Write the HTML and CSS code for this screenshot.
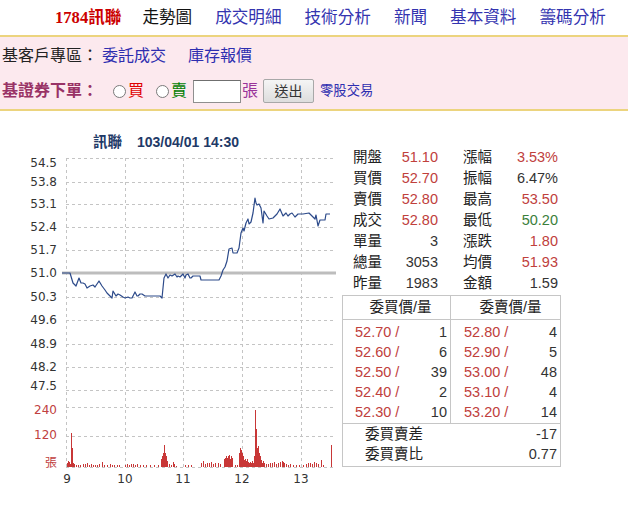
FILE: index.html
```html
<!DOCTYPE html>
<html lang="zh-Hant">
<head>
<meta charset="utf-8">
<title>1784訊聯 走勢圖</title>
<link rel="stylesheet" href="styles.css">
</head>
<body>
<div class="nav">
  <span class="brand"><span class="num">1784</span>訊聯</span>
  <span class="cur">走勢圖</span>
  <a class="nl">成交明細</a>
  <a class="nl">技術分析</a>
  <a class="nl">新聞</a>
  <a class="nl">基本資料</a>
  <a class="nl">籌碼分析</a>
</div>
<div class="panel">
  <div class="row1">
    <span class="lbl">基客戶專區：</span><a class="lk">委託成交</a><a class="lk lk2">庫存報價</a>
  </div>
  <div class="row2">
    <span class="order">基證券下單：</span>
    <span class="radio r1"></span><span class="buy">買</span>
    <span class="radio r2"></span><span class="sell">賣</span>
    <span class="qty"></span><span class="zhang">張</span>
    <span class="btn">送出</span>
    <a class="odd">零股交易</a>
  </div>
</div>
<div class="main">
  <div class="chart">
    <div class="title"><span class="tname">訊聯</span><span class="tdate">103/04/01 14:30</span></div>
    <svg class="plot" width="340" height="335" viewBox="0 150 340 335" xmlns="http://www.w3.org/2000/svg">
      <g stroke="#c4c4c4" stroke-width="1" stroke-dasharray="3 3" fill="none">
        <path d="M66 157.5H334M66 181.5H334M66 203.5H334M66 226.5H334M66 249.5H334M66 296.5H334M66 319.5H334M66 343.5H334M66 366.5H334M66 389.5H334M66 406.5H334M66 435.5H334M66 466.5H334"/>
        <path d="M66.5 157V467M125.5 157V467M183.5 157V467M242.5 157V467M301.5 157V467"/>
      </g>
      <path d="M62 272H336" stroke="#bdbdbd" stroke-width="3"/>
      <polyline fill="none" stroke="#2c4a8a" stroke-width="1.2" stroke-linejoin="round" points="62,272 70,272 73,282 76,285 79,277 81,282 83,282 85,283 87,287 90,285 93,284 95,286 97,283 99,280 102,285 105,289 107,292 110,295 112,297 113,290 116,295 118,293 120,294 123,296 125,297 128,296 130,297 132,297 135,291 137,295 138,295 140,293 142,293 145,295 160,295 162,297 164,277 166,273 168,277 170,274 172,275 175,273 177,276 178,275 180,276 183,273 185,277 186,274 188,273 190,277 191,277 193,275 200,275 201,279 219,279 221,275 223,269 225,266 227,260 229,248 232,247 233,252 237,252 239,247 241,232 243,227 244,230 246,222 248,218 249,223 251,221 253,212 255,197 256,202 257,204 259,203 261,207 263,222 264,210 267,215 269,218 273,217 277,213 280,208 283,215 286,212 288,215 290,213 292,212 295,216 298,213 303,213 309,212 312,215 315,218 316,214 318,225 320,219 325,219 326,213 330,213"/>
      <path stroke="#c83737" stroke-width="1" fill="none" d="M67.5 466V462M68.5 466V460M69.5 466V461M70.5 466V463M71.5 466V432M72.5 466V447M73.5 466V462M74.5 466V463M76.5 466V464M78.5 466V464M80.5 466V464M83.5 466V463M85.5 466V463M87.5 466V462M89.5 466V464M91.5 466V463M93.5 466V464M95.5 466V464M97.5 466V464M99.5 466V463M102.5 466V461M104.5 466V464M107.5 466V464M110.5 466V463M112.5 466V464M114.5 466V464M117.5 466V464M119.5 466V464M125.5 466V464M127.5 466V463M129.5 466V464M131.5 466V463M133.5 466V463M135.5 466V464M137.5 466V463M140.5 466V464M143.5 466V464M146.5 466V464M150.5 466V464M154.5 466V464M158.5 466V464M161.5 466V458M162.5 466V455M163.5 466V452M164.5 466V444M165.5 466V452M166.5 466V455M167.5 466V460M169.5 466V463M171.5 466V464M173.5 466V461M174.5 466V463M176.5 466V465M185.5 466V464M188.5 466V464M191.5 466V464M201.5 466V462M203.5 466V460M205.5 466V463M207.5 466V462M209.5 466V462M211.5 466V461M213.5 466V463M215.5 466V462M218.5 466V462M220.5 466V463M224.5 466V458M225.5 466V457M226.5 466V455M227.5 466V457M228.5 466V455M229.5 466V454M230.5 466V458M231.5 466V455M232.5 466V457M235.5 466V464M237.5 466V464M239.5 466V452M240.5 466V447M241.5 466V449M242.5 466V452M243.5 466V455M244.5 466V459M245.5 466V458M246.5 466V460M247.5 466V458M248.5 466V461M249.5 466V462M250.5 466V461M251.5 466V462M252.5 466V460M253.5 466V462M254.5 466V455M255.5 466V409M256.5 466V428M257.5 466V447M258.5 466V445M259.5 466V452M260.5 466V455M261.5 466V459M262.5 466V462M263.5 466V460M264.5 466V462M266.5 466V463M268.5 466V463M270.5 466V462M272.5 466V462M274.5 466V461M276.5 466V463M278.5 466V462M280.5 466V461M282.5 466V460M283.5 466V461M284.5 466V462M286.5 466V463M288.5 466V464M290.5 466V463M293.5 466V464M296.5 466V464M299.5 466V464M303.5 466V464M306.5 466V463M308.5 466V462M310.5 466V462M312.5 466V463M314.5 466V461M316.5 466V462M318.5 466V463M321.5 466V459M323.5 466V464M331.5 466V444"/>
      <g class="ylab" text-anchor="end">
        <text x="57" y="166">54.5</text>
        <text x="57" y="185">53.8</text>
        <text x="57" y="207">53.1</text>
        <text x="57" y="230">52.4</text>
        <text x="57" y="253">51.7</text>
        <text x="57" y="276">51.0</text>
        <text x="57" y="300">50.3</text>
        <text x="57" y="323">49.6</text>
        <text x="57" y="347">48.9</text>
        <text x="57" y="370">48.2</text>
        <text x="57" y="389">47.5</text>
        <text class="red" x="57" y="413">240</text>
        <text class="red" x="57" y="438">120</text>
        <text class="red" x="57" y="466">張</text>
      </g>
      <g class="xlab" text-anchor="middle">
        <text x="67" y="482">9</text>
        <text x="125" y="482">10</text>
        <text x="183" y="482">11</text>
        <text x="242" y="482">12</text>
        <text x="301" y="482">13</text>
      </g>
    </svg>
  </div>
  <div class="side">
    <div class="stats">
      <span class="k">開盤</span><span class="v up">51.10</span><span class="k k2">漲幅</span><span class="v up">3.53%</span>
      <span class="k">買價</span><span class="v up">52.70</span><span class="k k2">振幅</span><span class="v">6.47%</span>
      <span class="k">賣價</span><span class="v up">52.80</span><span class="k k2">最高</span><span class="v up">53.50</span>
      <span class="k">成交</span><span class="v up">52.80</span><span class="k k2">最低</span><span class="v dn">50.20</span>
      <span class="k">單量</span><span class="v">3</span><span class="k k2">漲跌</span><span class="v up">1.80</span>
      <span class="k">總量</span><span class="v">3053</span><span class="k k2">均價</span><span class="v up">51.93</span>
      <span class="k">昨量</span><span class="v">1983</span><span class="k k2">金額</span><span class="v">1.59</span>
    </div>
    <div class="book">
      <div class="bhead">
        <div class="hc hl">委買價/量</div>
        <div class="hc hr">委賣價/量</div>
      </div>
      <div class="bbody">
        <div class="bcol bl">
          <div class="br"><span class="p">52.70 /</span><span>1</span></div>
          <div class="br"><span class="p">52.60 /</span><span>6</span></div>
          <div class="br"><span class="p">52.50 /</span><span>39</span></div>
          <div class="br"><span class="p">52.40 /</span><span>2</span></div>
          <div class="br"><span class="p">52.30 /</span><span>10</span></div>
        </div>
        <div class="bcol brc">
          <div class="br"><span class="p">52.80 /</span><span>4</span></div>
          <div class="br"><span class="p">52.90 /</span><span>5</span></div>
          <div class="br"><span class="p">53.00 /</span><span>48</span></div>
          <div class="br"><span class="p">53.10 /</span><span>4</span></div>
          <div class="br"><span class="p">53.20 /</span><span>14</span></div>
        </div>
      </div>
      <div class="bsum">
        <div class="sr"><span>委買賣差</span><span>-17</span></div>
        <div class="sr"><span>委買賣比</span><span>0.77</span></div>
      </div>
    </div>
  </div>
</div>
</body>
</html>
```

FILE: styles.css
```css
html, body {
  margin: 0;
  padding: 0;
  background: #fff;
  overflow: hidden;
}
body {
  width: 628px;
  font-family: "Liberation Sans", "Noto Sans CJK TC", sans-serif;
  color: #222;
}
a { text-decoration: none; cursor: pointer; }

.nav {
  height: 35px;
  display: flex;
  align-items: center;
  padding-left: 55px;
  gap: 23px;
  font-size: 16.6px;
  line-height: 20px;
}
.nav .brand {
  color: #cc0000;
  font-weight: bold;
  font-family: "Liberation Serif", "Noto Sans CJK TC", serif;
  margin-right: -2px;
}
.nav .cur { color: #111; }
.nav .nl { color: #3434b0; }

.panel {
  background: #fce9ee;
  border-top: 2px solid #ecd47e;
  border-bottom: 2px solid #ecd47e;
  padding-bottom: 2px;
  font-size: 16px;
  line-height: 20px;
}
.row1 {
  height: 38px;
  display: flex;
  align-items: center;
  white-space: nowrap;
  padding-left: 2px;
}
.lbl { margin-right: 4px; }
.lk { color: #2e2eb0; }
.lk2 { margin-left: 22px; }
.row2 {
  height: 32px;
  display: flex;
  align-items: center;
  white-space: nowrap;
  padding-left: 2px;
}
.order {
  color: #993366;
  font-weight: bold;
  margin-right: 2px;
}
.radio {
  display: inline-block;
  box-sizing: border-box;
  width: 13px;
  height: 13px;
  border: 1px solid #7a7a7a;
  border-radius: 50%;
  background: #fff;
}
.r1 { margin-left: 13px; }
.r2 { margin-left: 12px; }
.buy { color: #e00000; margin-left: 2px; }
.sell { color: #008000; margin-left: 2px; }
.qty {
  display: inline-block;
  box-sizing: border-box;
  width: 48px;
  height: 23px;
  margin-left: 6px;
  background: #fff;
  border: 1px solid #8f8f8f;
  border-top-color: #6f6f6f;
}
.zhang { color: #993399; margin-left: 1px; }
.btn {
  display: inline-flex;
  align-items: center;
  justify-content: center;
  box-sizing: border-box;
  width: 51px;
  height: 24px;
  margin-left: 5px;
  border: 1px solid #a8a8a8;
  border-radius: 2px;
  background: linear-gradient(#f5f5f5, #dddddd);
  color: #333;
  font-size: 14px;
}
.odd {
  color: #2e2eb0;
  font-size: 13.3px;
  margin-left: 6px;
}

.main {
  display: flex;
}
.chart {
  width: 340px;
  flex: none;
}
.title {
  margin-top: 22px;
  height: 18px;
  line-height: 18px;
  padding-left: 93px;
  font-size: 14px;
  font-weight: bold;
  color: #1f3a68;
  white-space: nowrap;
}
.tname { font-size: 14.5px; }
.tdate { margin-left: 15px; }
.plot { display: block; }
.ylab, .xlab {
  font-family: "DejaVu Sans", sans-serif;
  font-size: 12px;
  fill: #333;
}
.ylab .red { fill: #c04040; font-family: "DejaVu Sans", "Noto Sans CJK TC", sans-serif; }

.side {
  padding-top: 36px;
  font-size: 14.5px;
  color: #333;
}
.stats {
  margin-left: 13px;
  display: grid;
  grid-template-columns: 30px 55px 55px 65px;
  grid-auto-rows: 21px;
  align-items: center;
  line-height: 21px;
  white-space: nowrap;
}
.stats .k { color: #222; }
.stats .k2 { padding-left: 25px; }
.stats .v { text-align: right; }
.up { color: #c0403c; }
.dn { color: #3b7f3b; }

.book {
  margin-left: 2px;
  margin-top: 1px;
  width: 219px;
  box-sizing: border-box;
  border: 1px solid #c6c6c6;
}
.bhead {
  display: flex;
  height: 23px;
  border-bottom: 1px solid #c6c6c6;
  line-height: 23px;
}
.hc { text-align: center; color: #222; }
.hl { width: 108px; border-right: 1px solid #c6c6c6; padding-left: 8px; box-sizing: border-box; }
.hr { flex: 1; padding-left: 10px; }
.bbody {
  display: flex;
  border-bottom: 1px solid #c6c6c6;
}
.bcol {
  padding: 2px 0 1px;
  box-sizing: border-box;
}
.bl { width: 108px; border-right: 1px solid #c6c6c6; padding-left: 12px; padding-right: 3px; }
.brc { flex: 1; padding-left: 13px; padding-right: 3px; }
.br {
  display: flex;
  justify-content: space-between;
  height: 20px;
  line-height: 20px;
}
.br .p { color: #c0403c; }
.bsum {
  padding: 0 3px 2px 22px;
}
.sr {
  display: flex;
  justify-content: space-between;
  height: 20px;
  line-height: 20px;
}
.sr span:first-child { color: #222; }
```
